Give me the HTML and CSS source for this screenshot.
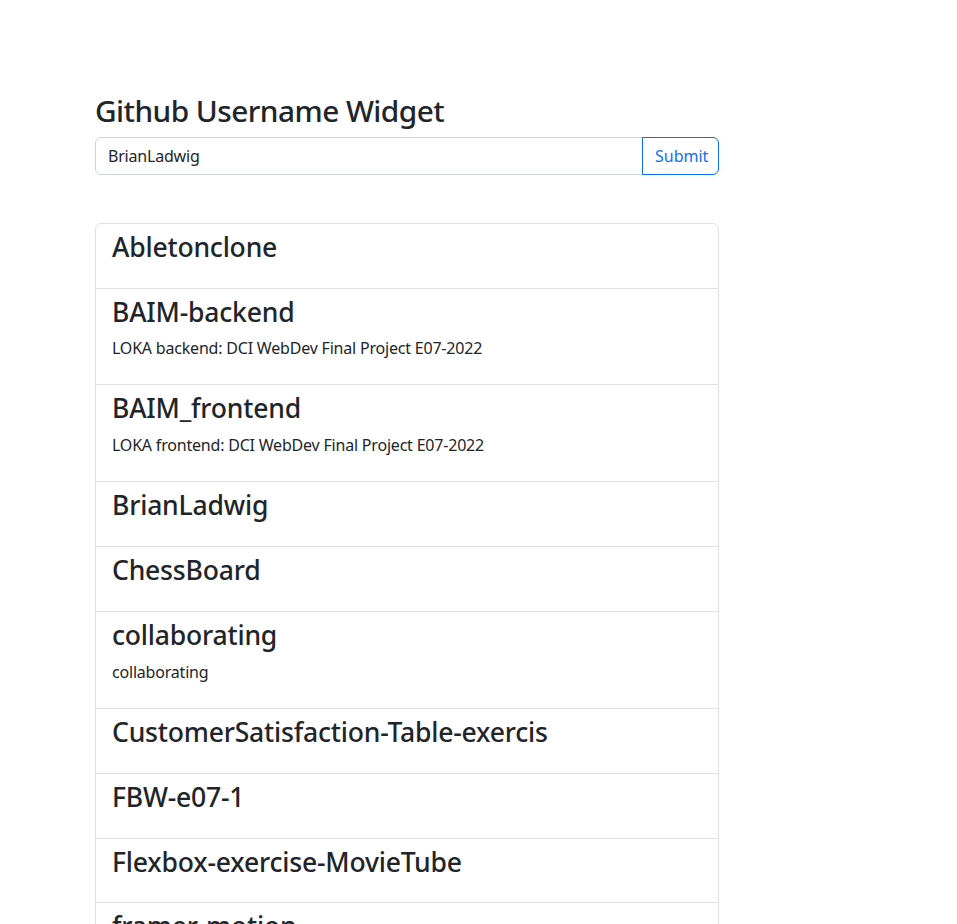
FILE: index.html
```html
<!DOCTYPE html>
<html lang="en">
<head>
<meta charset="utf-8">
<title>Github Username Widget</title>
<link rel="stylesheet" href="styles.css">
</head>
<body>
<div class="page">
  <h2 class="title">Github Username Widget</h2>
  <form class="input-group">
    <input class="form-control" type="text" value="BrianLadwig">
    <button class="btn" type="button">Submit</button>
  </form>
  <ul class="list-group">
    <li class="item"><h3>Abletonclone</h3><p></p></li>
    <li class="item"><h3>BAIM-backend</h3><p>LOKA backend: DCI WebDev Final Project E07-2022</p></li>
    <li class="item"><h3>BAIM_frontend</h3><p>LOKA frontend: DCI WebDev Final Project E07-2022</p></li>
    <li class="item"><h3>BrianLadwig</h3><p></p></li>
    <li class="item"><h3>ChessBoard</h3><p></p></li>
    <li class="item"><h3>collaborating</h3><p>collaborating</p></li>
    <li class="item"><h3>CustomerSatisfaction-Table-exercis</h3><p></p></li>
    <li class="item"><h3>FBW-e07-1</h3><p></p></li>
    <li class="item"><h3>Flexbox-exercise-MovieTube</h3><p></p></li>
    <li class="item"><h3>framer-motion</h3><p></p></li>
  </ul>
</div>
</body>
</html>
```
FILE: styles.css
```css
* { box-sizing: border-box; }
html, body {
  margin: 0;
  background: #fff;
  color: #212529;
  font-family: "Noto Sans", sans-serif;
  font-size: 16px;
  line-height: 1.5;
}
.page {
  width: 624px;
  margin-left: 95px;
  padding-top: 93px;
}
.title {
  margin: 0 0 8px;
  font-size: 29.8px;
  font-weight: 500;
  line-height: 1.2;
  letter-spacing: -0.55px;
}
.input-group {
  display: flex;
  margin: 0 0 48px;
}
.form-control {
  flex: 1;
  height: 38px;
  padding: 6px 12px;
  font: inherit;
  letter-spacing: -0.2px;
  color: #212529;
  border: 1px solid #ced4da;
  border-radius: 6px 0 0 6px;
  outline: none;
}
.btn {
  width: 77px;
  height: 38px;
  padding: 6px 12px;
  font: inherit;
  color: #0d6efd;
  background: #fff;
  border: 1px solid #0d6efd;
  border-radius: 0 6px 6px 0;
  margin-left: -1px;
}
.list-group {
  list-style: none;
  margin: 0;
  padding: 0;
  border: 1px solid #dee2e6;
  border-radius: 6px;
}
.item {
  padding: 8px 16px;
  border-top: 1px solid #dee2e6;
}
.item:first-child { border-top: 0; }
.item h3 {
  margin: 0 0 8px;
  font-size: 26.54px;
  font-weight: 500;
  line-height: 1.2;
  letter-spacing: -0.2px;
}
.item p {
  margin: 0 0 16px;
  letter-spacing: -0.2px;
}
```
